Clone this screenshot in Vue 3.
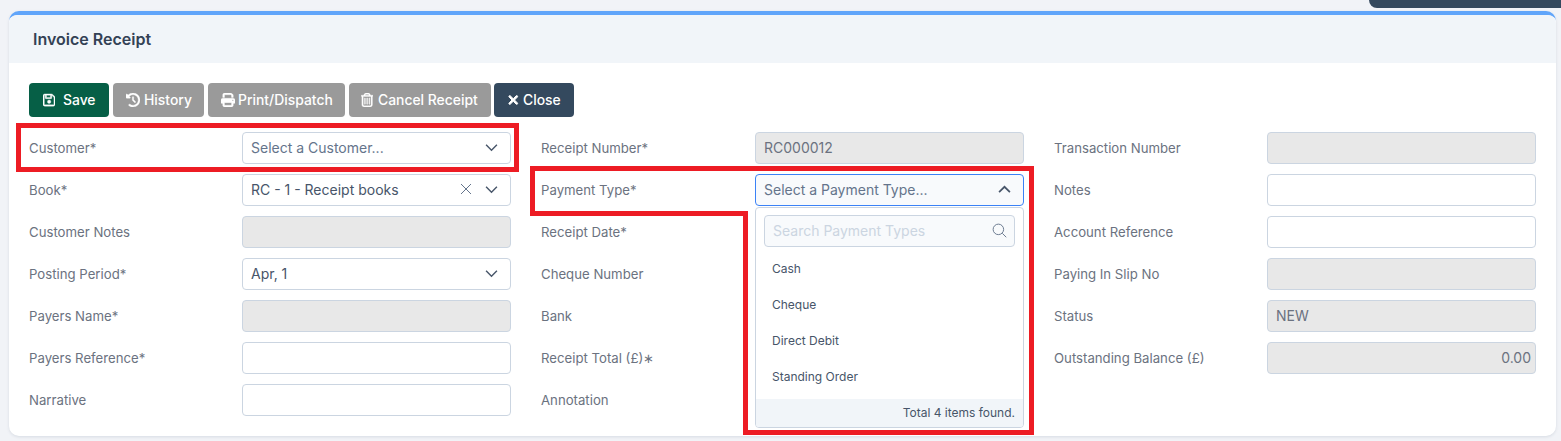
<script setup>
const columns = [
  [
    { label: 'Customer*', kind: 'select', placeholder: 'Select a Customer...' },
    { label: 'Book*', kind: 'select', value: 'RC - 1 - Receipt books', clear: true },
    { label: 'Customer Notes', kind: 'disabled' },
    { label: 'Posting Period*', kind: 'select', value: 'Apr, 1' },
    { label: 'Payers Name*', kind: 'disabled' },
    { label: 'Payers Reference*', kind: 'input' },
    { label: 'Narrative', kind: 'input' }
  ],
  [
    { label: 'Receipt Number*', kind: 'disabled', value: 'RC000012' },
    { label: 'Payment Type*', kind: 'open', placeholder: 'Select a Payment Type...' },
    { label: 'Receipt Date*', kind: 'input' },
    { label: 'Cheque Number', kind: 'input' },
    { label: 'Bank', kind: 'input' },
    { label: 'Receipt Total (£)∗', kind: 'input' },
    { label: 'Annotation', kind: 'input' }
  ],
  [
    { label: 'Transaction Number', kind: 'disabled' },
    { label: 'Notes', kind: 'input' },
    { label: 'Account Reference', kind: 'input' },
    { label: 'Paying In Slip No', kind: 'disabled' },
    { label: 'Status', kind: 'disabled', value: 'NEW' },
    { label: 'Outstanding Balance (£)', kind: 'disabled', value: '0.00', right: true }
  ]
]
const options = ['Cash', 'Cheque', 'Direct Debit', 'Standing Order']
</script>

<template>
  <div class="page">
    <div class="corner"></div>
    <section class="card">
      <header class="head">Invoice Receipt</header>
      <div class="body">
        <div class="actions">
          <button class="btn save">
            <svg class="ic" viewBox="0 0 448 512"><path d="M48 96V416c0 8.8 7.2 16 16 16H384c8.8 0 16-7.2 16-16V170.5c0-4.2-1.7-8.3-4.7-11.3l33.9-33.9c12 12 18.7 28.3 18.7 45.3V416c0 35.3-28.7 64-64 64H64c-35.3 0-64-28.7-64-64V96C0 60.7 28.7 32 64 32H309.5c17 0 33.3 6.7 45.3 18.7l74.5 74.5-33.9 33.9L320.8 84.7c-.3-.3-.5-.5-.8-.8V184c0 13.3-10.7 24-24 24H104c-13.3 0-24-10.7-24-24V80H64c-8.8 0-16 7.2-16 16zm80-16v80H272V80H128zm32 240a64 64 0 1 1 128 0 64 64 0 1 1 -128 0z"/></svg>
            Save
          </button>
          <button class="btn grey">
            <svg class="ic" viewBox="0 0 512 512"><path d="M75 75L41 41C25.9 25.9 0 36.6 0 57.9V168c0 13.3 10.7 24 24 24H134.1c21.4 0 32.1-25.9 17-41l-30.8-30.8C155 85.5 203 64 256 64c106 0 192 86 192 192s-86 192-192 192c-40.8 0-78.6-12.7-109.7-34.4c-14.5-10.1-34.4-6.6-44.6 7.9s-6.6 34.4 7.9 44.6C151.2 495 201.7 512 256 512c141.4 0 256-114.6 256-256S397.4 0 256 0C185.3 0 121.3 28.7 75 75zm181 53c-13.3 0-24 10.7-24 24V256c0 6.4 2.5 12.5 7 17l72 72c9.4 9.4 24.6 9.4 33.9 0s9.4-24.6 0-33.9l-65-65V152c0-13.3-10.7-24-24-24z"/></svg>
            History
          </button>
          <button class="btn grey">
            <svg class="ic" viewBox="0 0 512 512"><path d="M128 0C92.7 0 64 28.7 64 64v96h64V64H354.7L384 93.3V160h64V93.3c0-17-6.7-33.3-18.7-45.3L400 18.7C388 6.7 371.7 0 354.7 0H128zM384 352v32 64H128V384 368 352H384zm64 32h32c17.7 0 32-14.3 32-32V256c0-35.3-28.7-64-64-64H64c-35.3 0-64 28.7-64 64v96c0 17.7 14.3 32 32 32H64v64c0 35.3 28.7 64 64 64H384c35.3 0 64-28.7 64-64V384zM432 248a24 24 0 1 1 0 48 24 24 0 1 1 0-48z"/></svg>
            Print/Dispatch
          </button>
          <button class="btn grey">
            <svg class="ic" viewBox="0 0 448 512"><path d="M170.5 51.6L151.5 80h145l-19-28.4c-1.5-2.2-4-3.6-6.7-3.6H177.1c-2.7 0-5.2 1.3-6.7 3.6zm147-26.6L354.2 80H368h48 8c13.3 0 24 10.7 24 24s-10.7 24-24 24h-8V432c0 44.2-35.8 80-80 80H112c-44.2 0-80-35.8-80-80V128H24c-13.3 0-24-10.7-24-24S10.7 80 24 80h8H80 93.8l36.7-55.1C140.9 9.4 158.4 0 177.1 0h93.7c18.7 0 36.2 9.4 46.6 24.9zM80 128V432c0 17.7 14.3 32 32 32H336c17.7 0 32-14.3 32-32V128H80zm80 64V400c0 8.8-7.2 16-16 16s-16-7.2-16-16V192c0-8.8 7.2-16 16-16s16 7.2 16 16zm80 0V400c0 8.8-7.2 16-16 16s-16-7.2-16-16V192c0-8.8 7.2-16 16-16s16 7.2 16 16zm80 0V400c0 8.8-7.2 16-16 16s-16-7.2-16-16V192c0-8.8 7.2-16 16-16s16 7.2 16 16z"/></svg>
            Cancel Receipt
          </button>
          <button class="btn dark">
            <svg class="ic x" viewBox="0 0 384 512"><path d="M342.6 150.6c12.5-12.5 12.5-32.8 0-45.3s-32.8-12.5-45.3 0L192 210.7 86.6 105.4c-12.5-12.5-32.8-12.5-45.3 0s-12.5 32.8 0 45.3L146.7 256 41.4 361.4c-12.5 12.5-12.5 32.8 0 45.3s32.8 12.5 45.3 0L192 301.3 297.4 406.6c12.5 12.5 32.8 12.5 45.3 0s12.5-32.8 0-45.3L237.3 256 342.6 150.6z"/></svg>
            Close
          </button>
        </div>

        <div class="form">
          <div v-for="(col, c) in columns" :key="c" class="col">
            <div v-for="f in col" :key="f.label" class="row">
              <span class="label">{{ f.label }}</span>
              <div class="field" :class="['k-' + f.kind, { right: f.right }]">
                <span v-if="f.placeholder" class="ph">{{ f.placeholder }}</span>
                <span v-else-if="f.value" class="val">{{ f.value }}</span>
                <svg v-if="f.clear" class="clear" viewBox="0 0 12 12"><path d="M1 1l10 10M11 1L1 11"/></svg>
                <svg v-if="f.kind === 'select'" class="chev" viewBox="0 0 12 8"><path d="M1 1.5l5 5 5-5"/></svg>
                <svg v-if="f.kind === 'open'" class="chev up" viewBox="0 0 12 8"><path d="M1 6.5l5-5 5 5"/></svg>
              </div>
              <div v-if="f.kind === 'open'" class="drop">
                <div class="search">
                  <span>Search Payment Types</span>
                  <svg viewBox="0 0 16 16"><circle cx="6.8" cy="6.8" r="5.6"/><path d="M11 11l4.2 4.2"/></svg>
                </div>
                <ul class="opts">
                  <li v-for="o in options" :key="o">{{ o }}</li>
                </ul>
                <div class="foot">Total 4 items found.</div>
              </div>
            </div>
          </div>
        </div>
      </div>
    </section>

    <div class="mark mark-a"></div>
    <svg class="mark-b" viewBox="0 0 504 269" width="504" height="269">
      <path d="M2.5 2.5H501.5V266.5H215.5V47.5H2.5Z"/>
    </svg>
  </div>
</template>

<style>
html, body { margin: 0; background: #f1f3f7; }
</style>

<style scoped>
.page {
  position: relative;
  width: 1561px;
  height: 441px;
  overflow: hidden;
  padding: 11px 5px 0 9px;
  box-sizing: border-box;
  background: #f1f3f7;
  font-family: Inter, "Liberation Sans", sans-serif;
}
.corner {
  position: absolute;
  top: 0;
  left: 1369px;
  right: 0;
  height: 8px;
  background: #34495e;
  border-bottom-left-radius: 12px;
}
.card {
  height: 425px;
  background: #fff;
  border-top: 4px solid #60a5fa;
  border-radius: 10px;
  box-sizing: border-box;
  box-shadow: 0 1px 3px rgba(100, 116, 139, .18);
}
.head {
  height: 48px;
  line-height: 48px;
  padding-left: 24px;
  background: #f1f5f9;
  border-radius: 8px 8px 0 0;
  font-size: 16px;
  font-weight: 600;
  color: #334155;
}
.body { padding: 20px 0 0 20px; }
.actions { display: flex; gap: 4px; }
.btn {
  display: flex;
  align-items: center;
  height: 34px;
  padding: 0;
  border: 0;
  border-radius: 4px;
  font: 500 13.9px Inter, "Liberation Sans", sans-serif;
  color: #fff;
}
.btn:nth-child(1) { width: 80px; padding-left: 14px; gap: 7.75px; }
.btn:nth-child(2) { width: 91px; padding-left: 13px; gap: 4px; }
.btn:nth-child(3) { width: 137px; padding-left: 13px; gap: 3px; }
.btn:nth-child(4) { width: 142px; padding-left: 12px; gap: 4.75px; }
.btn:nth-child(5) { width: 80px; padding-left: 14px; gap: 4.5px; margin-left: -1px; }
.save { background: #065f46; }
.grey { background: #9a9a9a; }
.dark { background: #34495e; }
.ic { height: 14px; width: 14px; fill: #fff; stroke: #fff; stroke-width: 12; flex: none; }
.save .ic, .btn:nth-child(4) .ic { width: 12.25px; }
.ic.x { width: 10.5px; stroke-width: 36; }
.form {
  display: grid;
  grid-template-columns: 482px 483px 482px;
  column-gap: 30px;
  margin-top: 15px;
}
.col { display: flex; flex-direction: column; gap: 10px; }
.row { position: relative; display: flex; align-items: center; height: 32px; }
.label { width: 213px; font-size: 13.2px; color: #6b7280; flex: none; }
.col:nth-child(2) .label { width: 214px; }
.field {
  position: relative;
  display: flex;
  align-items: center;
  width: 269px;
  height: 32px;
  box-sizing: border-box;
  padding: 0 8px 2px;
  border: 1px solid #cbd5e1;
  border-radius: 4px;
  background: #fff;
  font-size: 14px;
  color: #475569;
}
.k-disabled { background: #e8e8e8; color: #6b7280; }
.k-open { background: #f8fafc; border-color: #3b82f6; }
.right { justify-content: flex-end; padding-right: 4px; }
.ph { color: #64748b; }
.clear {
  position: absolute;
  right: 38px;
  width: 12px;
  height: 12px;
  fill: none;
  stroke: #64748b;
  stroke-width: 1;
}
.chev {
  position: absolute;
  right: 12px;
  width: 13px;
  height: 9px;
  fill: none;
  stroke: #475569;
  stroke-width: 1.3;
}
.chev.up { stroke: #475569; stroke-width: 1.6; }
.drop {
  position: absolute;
  z-index: 2;
  top: 33px;
  left: 214px;
  width: 269px;
  height: 221px;
  box-sizing: border-box;
  display: flex;
  flex-direction: column;
  padding-top: 7px;
  background: #fff;
  border: 1px solid #cbd5e1;
  border-radius: 4px;
}
.search {
  display: flex;
  align-items: center;
  justify-content: space-between;
  height: 32px;
  margin: 0 8px;
  padding: 0 7px 2px 8px;
  box-sizing: border-box;
  flex: none;
  border: 1px solid #cbd5e1;
  border-radius: 4px;
  background: #f8fafc;
  font-size: 14px;
  color: #cbd5e1;
}
.search svg { width: 15px; height: 15px; fill: none; stroke: #64748b; stroke-width: 1; }
.opts {
  list-style: none;
  margin: 4px 0 0;
  padding: 0;
  flex: 1;
  font-size: 12px;
  color: #475569;
}
.opts li { height: 36px; line-height: 36px; padding-left: 16px; }
.foot {
  height: 28px;
  line-height: 28px;
  padding-right: 8px;
  text-align: right;
  flex: none;
  font-size: 12px;
  color: #475569;
  background: #f1f5f9;
  border-radius: 0 0 3px 3px;
}
.mark-a {
  position: absolute;
  left: 16px;
  top: 123px;
  width: 503px;
  height: 49px;
  box-sizing: border-box;
  border: 5px solid #ed1c24;
}
.mark-b {
  position: absolute;
  left: 530px;
  top: 166px;
  fill: none;
  stroke: #ed1c24;
  stroke-width: 5;
}
</style>
